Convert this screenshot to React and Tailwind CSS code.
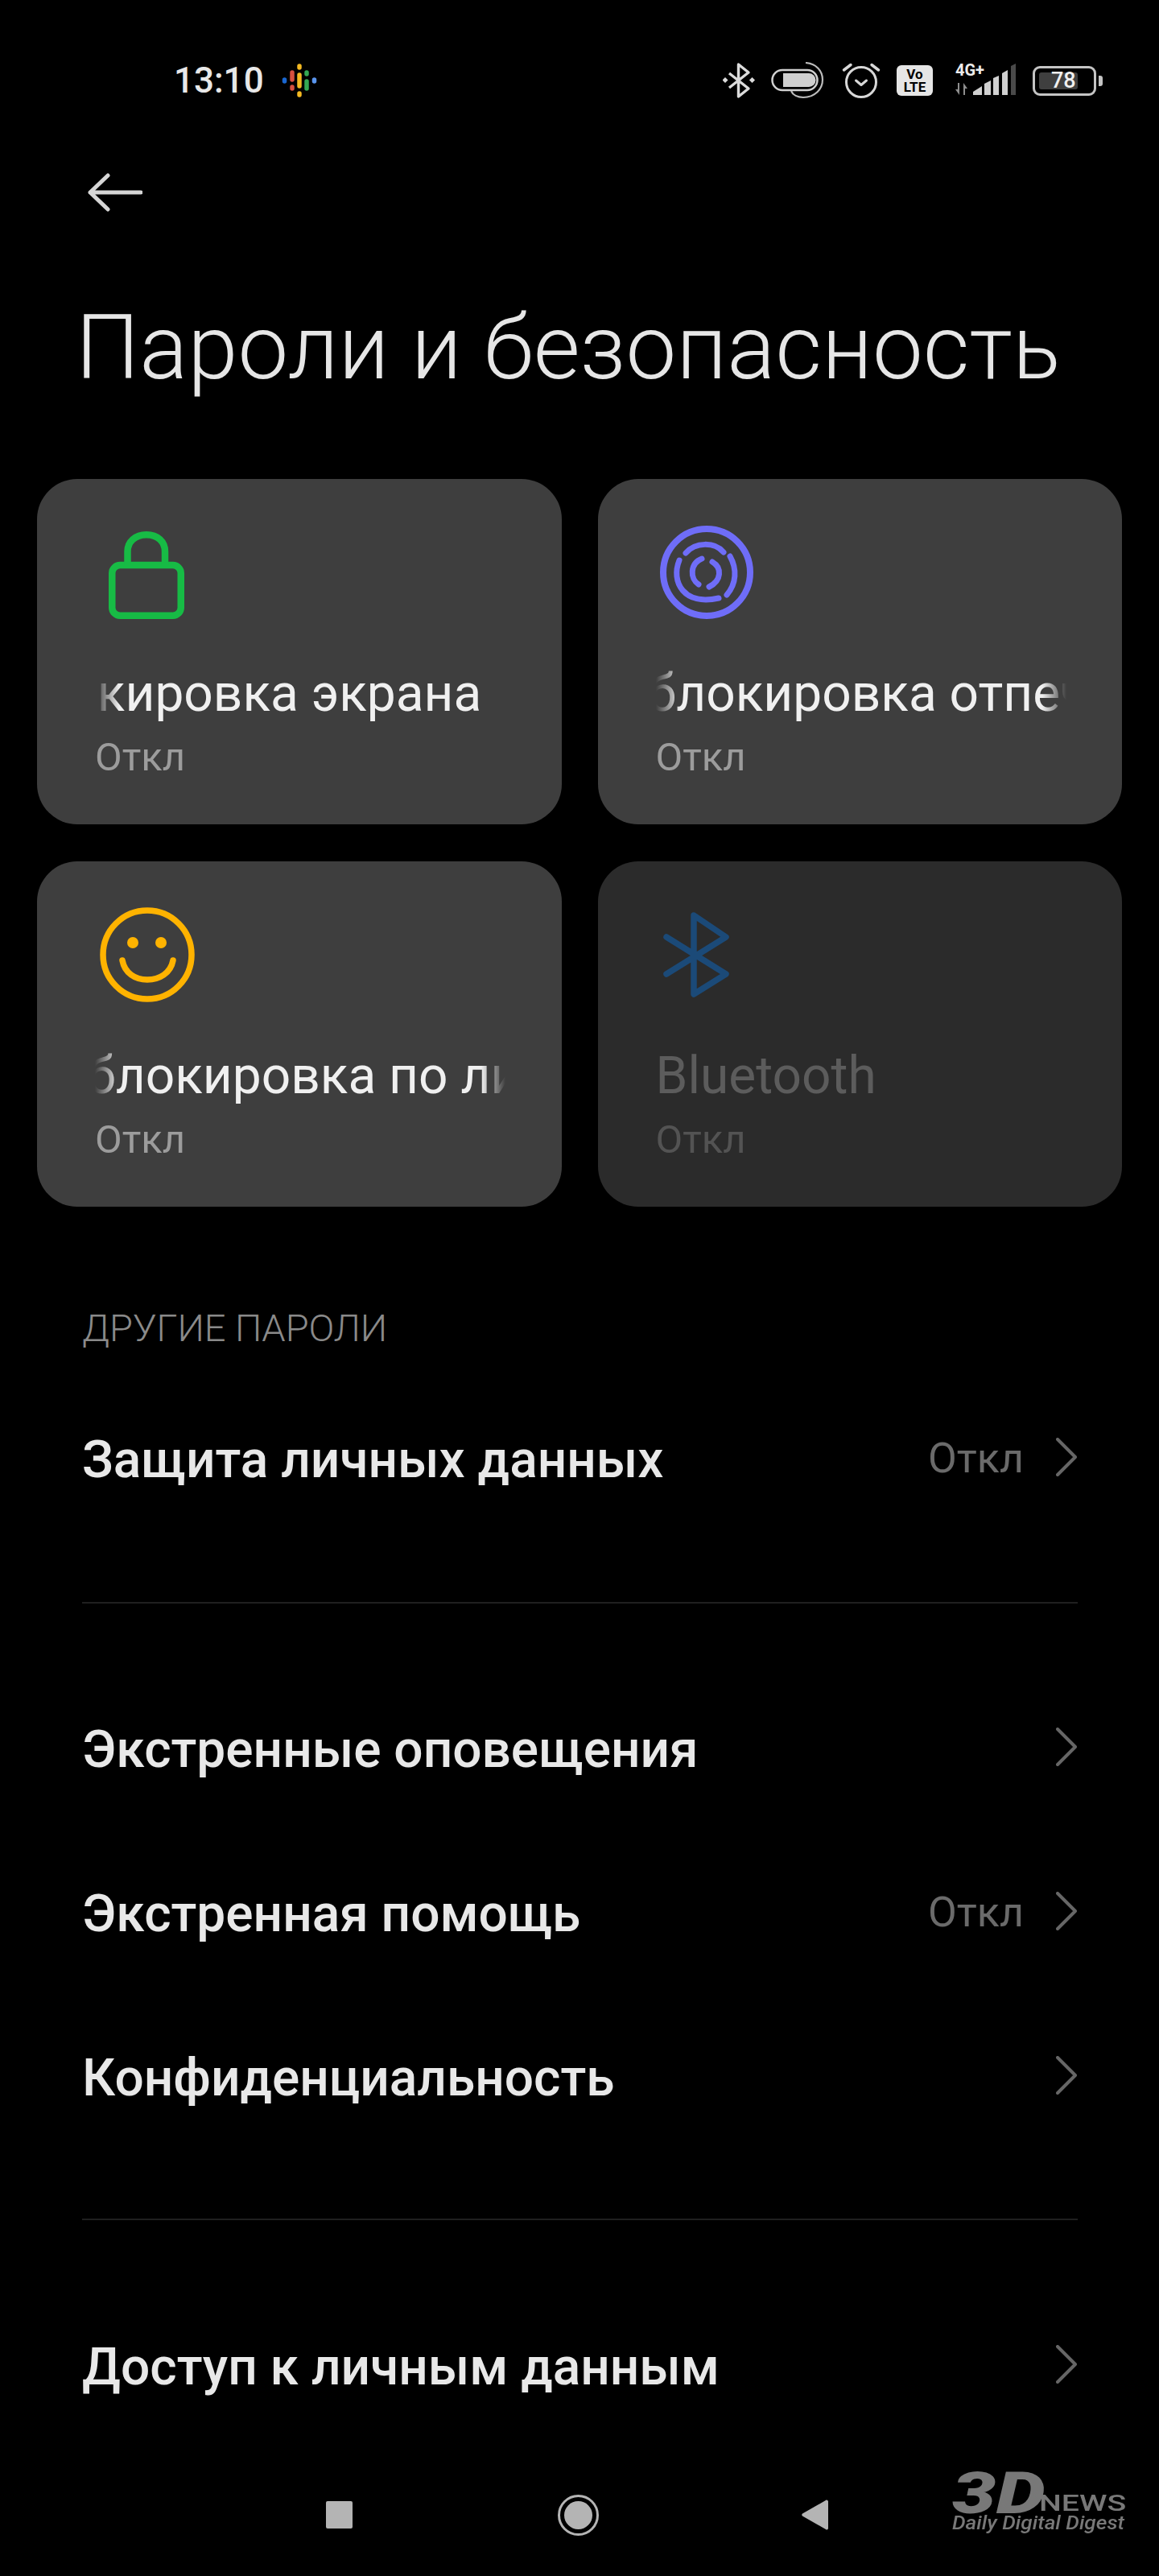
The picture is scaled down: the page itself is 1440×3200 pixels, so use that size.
import React from 'react';

const fade = '[mask-image:linear-gradient(to_right,transparent_0,black_30px,black_calc(100%-30px),transparent_100%)]';

function PodcastIcon() {
  return (
    <svg width="44" height="44" viewBox="0 0 44 44" fill="none" strokeLinecap="round" strokeWidth="5.5">
      <path d="M22 4v2M22 15v14M22 38v2" stroke="#f5b921" />
      <path d="M13 12v9M13 30v2" stroke="#d8503f" />
      <path d="M31 12v2M31 23v9" stroke="#34a853" />
      <path d="M3.500 21v2" stroke="#1a66d0" />
      <path d="M40.500 21v2" stroke="#5a95ee" />
    </svg>
  );
}

function StatusIcons() {
  return (
    <div className="flex items-center">
      {/* bluetooth */}
      <svg width="40" height="46" viewBox="0 0 40 46" fill="none" stroke="#dcdcdc" strokeWidth="3.4" strokeLinejoin="round">
        <path d="M8 14 32 33 19.500 43V3L32 13 8 32" />
        <rect x="0.500" y="20" width="5" height="5" fill="#dcdcdc" stroke="none" transform="rotate(45 3 22.500)" />
        <rect x="34" y="20" width="5" height="5" fill="#dcdcdc" stroke="none" transform="rotate(45 36.500 22.500)" />
      </svg>
      {/* battery saver */}
      <svg width="68" height="46" viewBox="0 0 68 46" fill="none" className="ml-[20px]">
        <rect x="1.500" y="10" width="56" height="25" rx="12.500" stroke="#d0d0d0" strokeWidth="2.500" />
        <path d="M15 14h32a8.500 8.500 0 0 1 0 17H15z" fill="#d0d0d0" />
        <path d="M43 1c13 1 21 10 21 21 0 12-10 22-24 22-7 0-13-3-15-8" stroke="#bcbcbc" strokeWidth="2.200" />
      </svg>
      {/* alarm */}
      <svg width="48" height="46" viewBox="0 0 48 46" fill="none" stroke="#d8d8d8" strokeWidth="3" strokeLinecap="round" strokeLinejoin="round" className="ml-[20px]">
        <circle cx="24" cy="25" r="18.500" />
        <path d="M17.500 23l6.500 5.500 6.500-5.500" />
        <path d="M2.500 10 11 3.500M45.500 10 37 3.500" strokeWidth="3.500" />
      </svg>
      {/* volte */}
      <div className="ml-[20px] w-[45px] h-[38px] bg-[#e6e6e6] rounded-[6px] flex flex-col items-center justify-center text-black font-bold text-[17px] leading-[16px]">
        <span>Vo</span>
        <span>LTE</span>
      </div>
      {/* signal */}
      <div className="ml-[28px] w-[76px] h-[46px] relative">
        <span className="absolute left-0 top-0 font-bold text-[20px] leading-[20px] text-[#ececec]">4G+</span>
        <svg width="76" height="46" viewBox="0 0 76 46" className="absolute left-0 top-0">
          <path d="M5 41 0 34h3v-8h2zM10 26l5 7h-3v8h-2z" fill="#8e8e8e" />
          <path d="M22 41v-4l11-7v11z" fill="#d0d0d0" />
          <path d="M36 41V27l8-4v18z" fill="#d0d0d0" />
          <path d="M47 41V20l7-3v24z" fill="#d0d0d0" />
          <path d="M58 41V14l7-4v31z" fill="#d0d0d0" />
          <path d="M69 41V5l6-3v39z" fill="#4a4a4a" />
        </svg>
      </div>
      {/* battery */}
      <div className="ml-[20px] flex items-center">
        <div className="w-[79px] h-[37px] rounded-[9px] border-[3.5px] border-[#c4c4c4] relative flex items-center">
          <div className="ml-[5px] w-[48px] h-[21px] rounded-[3px] bg-[#3f3f3f]" />
          <span className="absolute left-[20px] top-[-2px] font-medium text-[27px] leading-[34px] text-[#f0f0f0]">78</span>
        </div>
        <div className="ml-[3px] w-[5px] h-[13px] rounded-r-[3px] bg-[#c4c4c4]" />
      </div>
    </div>
  );
}

function LockIcon() {
  return (
    <svg width="94" height="109" viewBox="0 0 94 109" fill="none" stroke="#17bb45" strokeWidth="8.500">
      <rect x="4.250" y="42" width="85.500" height="62.750" rx="10" />
      <path d="M23.500 42V25C23.500 13 33 4.250 47 4.250S70 13 70 25V42" />
    </svg>
  );
}

function FingerIcon() {
  return (
    <svg width="116" height="116" viewBox="0 0 116 116" fill="none" stroke="#6f6df8" strokeWidth="7" strokeLinecap="round">
      <circle cx="58" cy="58" r="54" strokeWidth="8" />
      <path d="M32 34C44 20 68 20 79 33" />
      <path d="M87 38C96 54 95 72 83 86" />
      <path d="M24 43C13 70 30 100 73 90" />
      <path d="M52 41C37 47 37 66 48 73" />
      <path d="M65 45C77 52 77 68 61 76" />
    </svg>
  );
}

function SmileIcon() {
  return (
    <svg width="118" height="118" viewBox="0 0 118 118" fill="none" stroke="#ffb300" strokeWidth="7.500" strokeLinecap="round">
      <circle cx="59" cy="59" r="55" />
      <circle cx="41" cy="44" r="7" fill="#ffb300" stroke="none" />
      <circle cx="76" cy="44" r="7" fill="#ffb300" stroke="none" />
      <path d="M28 66C31 82 44 90 59 90S88 82 91 66" />
    </svg>
  );
}

function BluetoothIcon() {
  return (
    <svg width="84" height="106" viewBox="0 0 84 106" fill="none" stroke="#1b4a78" strokeWidth="7.500" strokeLinecap="round" strokeLinejoin="round">
      <path d="M5 31 79 77 39 102V4L79 31 5 77" />
    </svg>
  );
}

function Tile({ icon, iconClass, title, shift, disabled, fadeEdges }) {
  return (
    <div className={`h-[429px] rounded-[50px] pl-[72px] flex flex-col ${disabled ? 'bg-[#2b2b2b]' : 'bg-[#3e3e3e]'}`}>
      <div className={`h-[116px] mt-[58px] flex items-center ${iconClass}`}>{icon}</div>
      <div className={`mt-[57px] w-[510px] h-[72px] overflow-hidden whitespace-nowrap text-[64px] leading-[72px] ${disabled ? 'text-[#5c5c5c]' : 'text-[#f0f0f0]'} ${fadeEdges ? fade : ''}`}>
        <span className={`inline-block ${shift}`}>{title}</span>
      </div>
      <div className={`mt-[17px] text-[49px] leading-[52px] ${disabled ? 'text-[#535353]' : 'text-[#9c9c9c]'}`}>Откл</div>
    </div>
  );
}

function Row({ title, value }) {
  return (
    <div className="h-[204px] flex items-center justify-between pl-[102px] pr-[102px]">
      <span className="text-[64px] leading-[72px] font-medium text-[#e8e8e8]">{title}</span>
      <div className="flex items-center mb-[4px]">
        {value && <span className="text-[52px] leading-[60px] text-[#6a6a6a] mr-[40px]">{value}</span>}
        <svg width="26" height="48" viewBox="0 0 26 48" fill="none" stroke="#666666" strokeWidth="4" strokeLinecap="round" strokeLinejoin="round" className="mb-[4px]">
          <path d="M2 2 24 24 2 46" />
        </svg>
      </div>
    </div>
  );
}

function NewsLogo() {
  return (
    <div className="absolute left-[1183px] top-[-6px] w-[216px] h-[76px] text-[#787878] whitespace-nowrap">
      <span className="absolute left-0 top-[3px] origin-left scale-x-[1.35] font-black italic text-[72px] leading-[54px]">3D</span>
      <span className="absolute left-[108px] top-[28px] origin-left scale-x-[1.4] font-medium text-[28px] leading-[28px]">NEWS</span>
      <span className="absolute left-0 top-[57px] origin-left scale-x-[1.14] font-medium italic text-[23px] leading-[20px]">Daily Digital Digest</span>
    </div>
  );
}

export default function App() {
  return (
    <div className="w-[1440px] h-[3200px] bg-black overflow-hidden flex flex-col font-['Roboto',sans-serif]">
      {/* --- STATUS BAR --- */}
      <div className="h-[200px] shrink-0 flex items-center justify-between pl-[216px] pr-[70px]">
        <div className="flex items-center">
          <span className="text-[44px] leading-[52px] font-medium text-[#e8e8e8]">13:10</span>
          <div className="ml-[22px]"><PodcastIcon /></div>
        </div>
        <StatusIcons />
      </div>

      {/* --- BACK + TITLE --- */}
      <div className="h-[78px] shrink-0 pl-[109px] flex items-center">
        <svg width="68" height="48" viewBox="0 0 68 48" fill="none" stroke="#d6d6d6" strokeWidth="5" strokeLinecap="round" strokeLinejoin="round">
          <path d="M3 24h63M25 3 3 24l22 21" />
        </svg>
      </div>
      <h1 className="mt-[89px] pl-[94px] text-[112px] leading-[130px] font-light text-[#e6e6e6]">Пароли и безопасность</h1>

      {/* --- TILES --- */}
      <div className="mt-[98px] px-[46px] grid grid-cols-2 gap-x-[45px] gap-y-[46px]">
        <Tile icon={<LockIcon />} iconClass="pl-[17px] pt-[7px]" title="Блокировка экрана" shift="-ml-[111px]" fadeEdges />
        <Tile icon={<FingerIcon />} iconClass="pl-[5px]" title="Разблокировка отпечатком" shift="-ml-[117px]" fadeEdges />
        <Tile icon={<SmileIcon />} iconClass="pl-[6px]" title="Разблокировка по лицу" shift="-ml-[117px]" fadeEdges />
        <Tile icon={<BluetoothIcon />} iconClass="pl-[8px]" title="Bluetooth" disabled />
      </div>

      {/* --- LIST --- */}
      <div className="mt-[123px] pl-[102px] text-[47px] leading-[56px] font-light text-[#8a8a8a]">ДРУГИЕ ПАРОЛИ</div>
      <div className="mt-[34px]"><Row title="Защита личных данных" value="Откл" /></div>
      <div className="ml-[102px] mr-[101px] mt-[74px] h-[2px] shrink-0 bg-[#1f1f1f]" />
      <div className="mt-[80px]">
        <Row title="Экстренные оповещения" />
        <Row title="Экстренная помощь" value="Откл" />
        <Row title="Конфиденциальность" />
      </div>
      <div className="ml-[102px] mr-[101px] mt-[72px] h-[2px] shrink-0 bg-[#1f1f1f]" />
      <div className="mt-[81px]"><Row title="Доступ к личным данным" /></div>

      {/* --- NAV BAR --- */}
      <div className="mt-[31px] h-[100px] shrink-0 relative flex items-center pl-[405px]">
        <div className="w-[33px] h-[34px] rounded-[2px] bg-[#b4b4b4]" />
        <div className="ml-[255px] w-[51px] h-[51px] rounded-full border-[3px] border-[#b4b4b4] flex items-center justify-center">
          <div className="w-[35px] h-[35px] rounded-full bg-[#b4b4b4]" />
        </div>
        <svg width="33" height="38" viewBox="0 0 33 38" fill="#b4b4b4" className="ml-[252px]">
          <path d="M31 0.500c1 0 2 1 2 2v33c0 1.500-1 2-2 2-.5 0-1-.3-1.500-.8L1 20.500c-1-1-1-2 0-3L29.500 1.300c.5-.5 1-.8 1.500-.8z" />
        </svg>
        <NewsLogo />
      </div>
    </div>
  );
}
